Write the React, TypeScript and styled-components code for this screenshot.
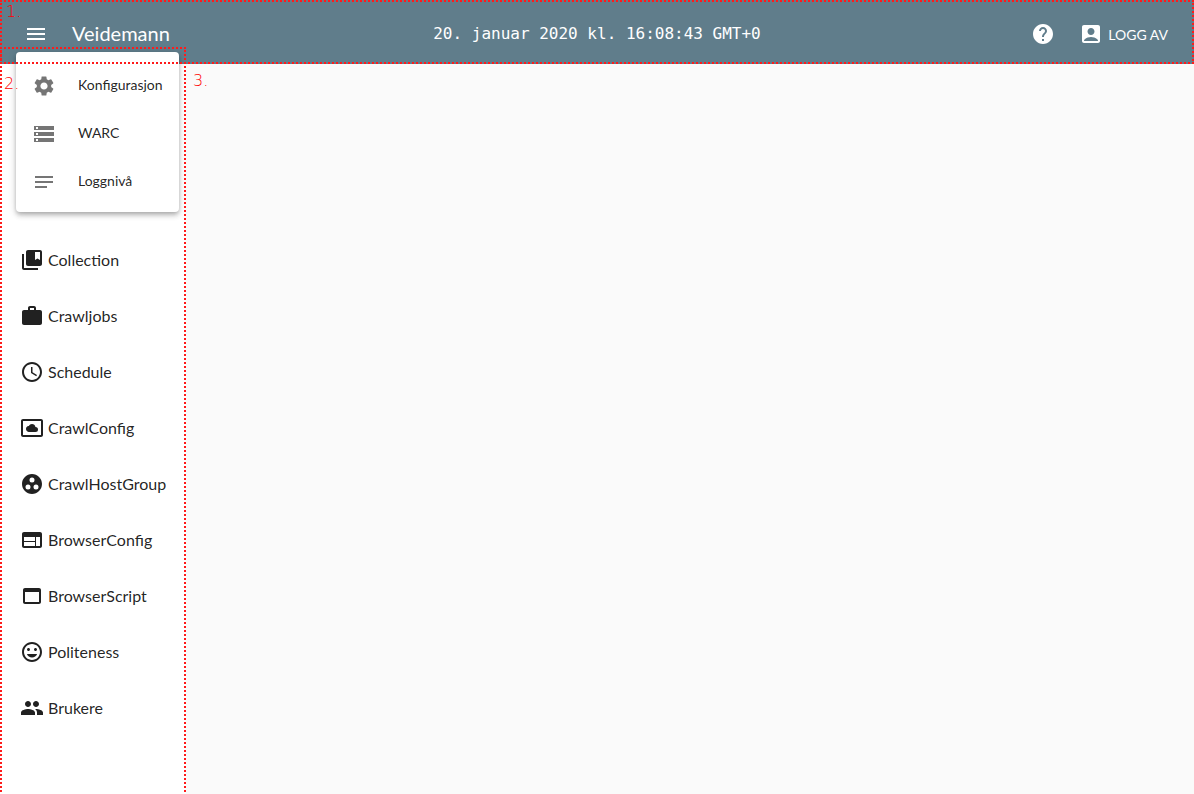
import React from 'react';
import styled, { createGlobalStyle } from 'styled-components';
import {
  MdAccountBox,
  MdCollectionsBookmark,
  MdGroupWork,
  MdHelp,
  MdInsertEmoticon,
  MdMenu,
  MdNotes,
  MdPeople,
  MdSchedule,
  MdSettings,
  MdSettingsSystemDaydream,
  MdStorage,
  MdWeb,
  MdWork,
} from 'react-icons/md';

const GlobalStyle = createGlobalStyle`
  *, *::before, *::after { box-sizing: border-box; }
  body {
    margin: 0;
    background: #fafafa;
    color: rgba(0, 0, 0, 0.87);
    font-family: Lato, "Liberation Sans", sans-serif;
  }
  button { border: 0; padding: 0; background: none; color: inherit; font: inherit; cursor: pointer; }
`;

const Page = styled.div`
  position: relative;
  display: flex;
  flex-direction: column;
  height: 100vh;
  overflow: hidden;
`;

const Toolbar = styled.header`
  display: grid;
  grid-template-columns: 1fr auto 1fr;
  align-items: center;
  flex: none;
  height: 64px;
  padding: 4px 16px 0;
  background: #607d8b;
  color: #fff;
`;

const Brand = styled.div`
  display: flex;
  align-items: center;
  gap: 16px;
`;

const Title = styled.h1`
  margin: 0;
  padding-bottom: 2px;
  font-size: 20px;
  font-weight: 400;
  line-height: 24px;
`;

const IconButton = styled.button`
  display: flex;
  align-items: center;
  justify-content: center;
  width: 40px;
  height: 40px;
`;

const Clock = styled.time`
  font-family: "DejaVu Sans Mono", monospace;
  font-size: 16px;
  line-height: 24px;
`;

const Actions = styled.div`
  display: flex;
  align-items: center;
  justify-content: flex-end;
  gap: 16px;
`;

const LogoutButton = styled.button`
  display: flex;
  align-items: center;
  gap: 5px;
  height: 36px;
  padding-right: 10px;
  font-size: 14px;
`;

const Body = styled.div`
  display: flex;
  flex: 1;
  min-height: 0;
`;

const Sidebar = styled.nav`
  flex: none;
  width: 186px;
  padding-top: 168px;
  background: #fff;
`;

const NavList = styled.ul`
  margin: 0;
  padding: 0;
  list-style: none;
`;

const NavLink = styled.a`
  display: flex;
  align-items: center;
  gap: 4px;
  height: 56px;
  padding-left: 20px;
  color: inherit;
  font-size: 16px;
  text-decoration: none;
`;

const NavLabel = styled.span`
  padding-bottom: 2px;
`;

const Content = styled.main`
  flex: 1;
`;

const Menu = styled.div`
  position: absolute;
  top: 52px;
  left: 16px;
  padding: 10px 0 6px;
  border-radius: 4px;
  background: #fff;
  box-shadow: 0 2px 4px -1px rgba(0, 0, 0, 0.2), 0 4px 5px 0 rgba(0, 0, 0, 0.14),
    0 1px 10px 0 rgba(0, 0, 0, 0.12);
`;

const MenuItem = styled.button`
  display: flex;
  align-items: center;
  gap: 22px;
  width: 100%;
  height: 48px;
  padding: 0 16px;
  font-size: 14px;

  svg { color: rgba(0, 0, 0, 0.54); }
`;

const MenuLabel = styled.span`
  padding-bottom: 4px;
`;

const Outline = styled.div<{ $area: 'header' | 'sidebar' }>`
  position: absolute;
  pointer-events: none;
  border: 2px dotted #ff1a1a;
  ${({ $area }) =>
    $area === 'header'
      ? 'top: 0; left: 0; right: 0; height: 64px;'
      : 'top: 47px; left: 0; bottom: -2px; width: 186px;'}
`;

const Marker = styled.span<{ $x: number; $y: number }>`
  position: absolute;
  top: ${({ $y }) => $y}px;
  left: ${({ $x }) => $x}px;
  color: #f00;
  font-family: "DejaVu Sans", sans-serif;
  font-size: 16px;
  font-weight: 200;
  line-height: 20px;
`;

function WindowIcon() {
  return (
    <svg width="24" height="24" viewBox="0 0 24 24" fill="currentColor" aria-hidden="true">
      <path d="M19 4H5c-1.11 0-2 .9-2 2v12c0 1.1.89 2 2 2h14c1.1 0 2-.9 2-2V6c0-1.1-.89-2-2-2zm0 14H5V8h14v10z" />
    </svg>
  );
}

const menuItems = [
  { label: 'Konfigurasjon', icon: <MdSettings size={24} /> },
  { label: 'WARC', icon: <MdStorage size={24} /> },
  { label: 'Loggnivå', icon: <MdNotes size={24} /> },
];

const navItems = [
  { label: 'Collection', icon: <MdCollectionsBookmark size={24} /> },
  { label: 'Crawljobs', icon: <MdWork size={24} /> },
  { label: 'Schedule', icon: <MdSchedule size={24} /> },
  { label: 'CrawlConfig', icon: <MdSettingsSystemDaydream size={24} /> },
  { label: 'CrawlHostGroup', icon: <MdGroupWork size={24} /> },
  { label: 'BrowserConfig', icon: <MdWeb size={24} /> },
  { label: 'BrowserScript', icon: <WindowIcon /> },
  { label: 'Politeness', icon: <MdInsertEmoticon size={24} /> },
  { label: 'Brukere', icon: <MdPeople size={24} /> },
];

export default function App() {
  return (
    <Page>
      <GlobalStyle />
      <Toolbar>
        <Brand>
          <IconButton aria-label="Meny" aria-expanded="true">
            <MdMenu size={24} />
          </IconButton>
          <Title>Veidemann</Title>
        </Brand>
        <Clock>20. januar 2020 kl. 16:08:43 GMT+0</Clock>
        <Actions>
          <IconButton aria-label="Hjelp">
            <MdHelp size={24} />
          </IconButton>
          <LogoutButton>
            <MdAccountBox size={24} />
            LOGG AV
          </LogoutButton>
        </Actions>
      </Toolbar>
      <Body>
        <Sidebar>
          <NavList>
            {navItems.map(({ label, icon }) => (
              <li key={label}>
                <NavLink href="#">
                  {icon}
                  <NavLabel>{label}</NavLabel>
                </NavLink>
              </li>
            ))}
          </NavList>
        </Sidebar>
        <Content />
      </Body>
      <Menu role="menu">
        {menuItems.map(({ label, icon }) => (
          <MenuItem role="menuitem" key={label}>
            {icon}
            <MenuLabel>{label}</MenuLabel>
          </MenuItem>
        ))}
      </Menu>
      <Outline $area="header" />
      <Outline $area="sidebar" />
      <Marker $x={6} $y={2}>1.</Marker>
      <Marker $x={4} $y={74}>2.</Marker>
      <Marker $x={193} $y={71}>3.</Marker>
    </Page>
  );
}
